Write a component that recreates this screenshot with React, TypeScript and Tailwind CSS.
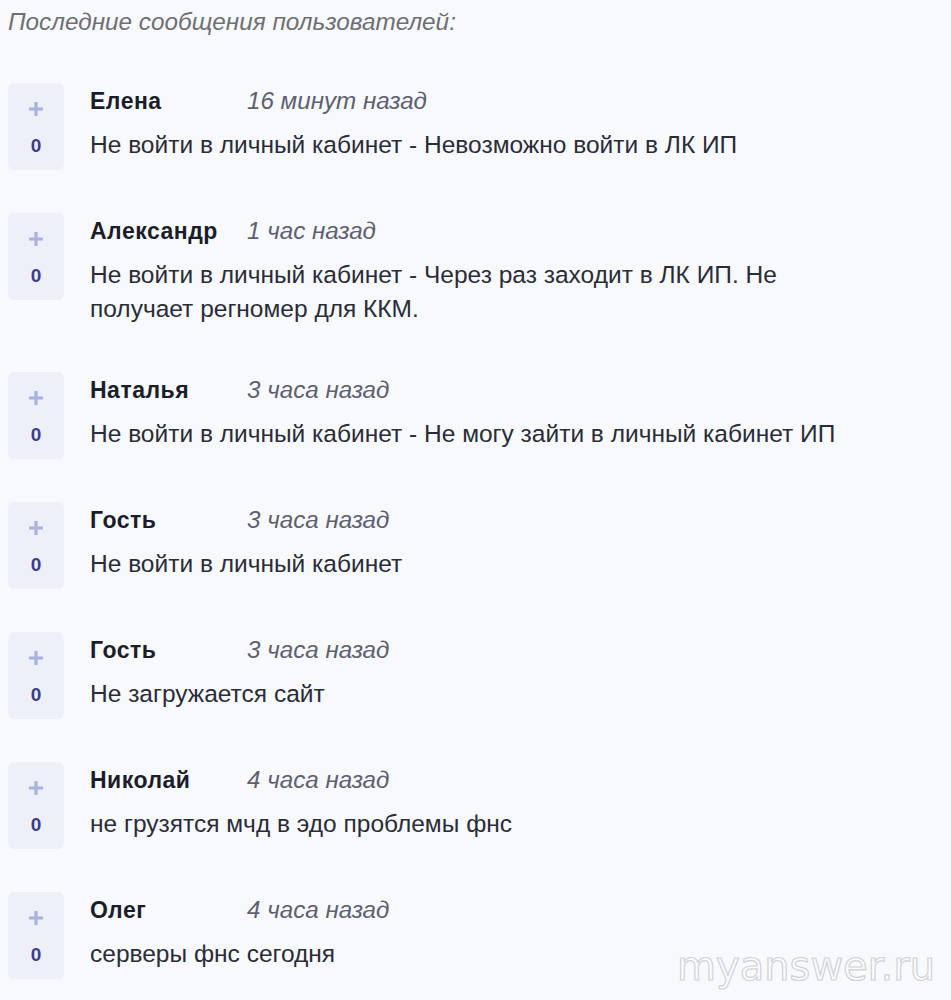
const messages = [
  { name: "Елена", time: "16 минут назад", text: "Не войти в личный кабинет - Невозможно войти в ЛК ИП" },
  {
    name: "Александр",
    time: "1 час назад",
    text: "Не войти в личный кабинет - Через раз заходит в ЛК ИП. Не получает регномер для ККМ.",
  },
  { name: "Наталья", time: "3 часа назад", text: "Не войти в личный кабинет - Не могу зайти в личный кабинет ИП" },
  { name: "Гость", time: "3 часа назад", text: "Не войти в личный кабинет" },
  { name: "Гость", time: "3 часа назад", text: "Не загружается сайт" },
  { name: "Николай", time: "4 часа назад", text: "не грузятся мчд в эдо проблемы фнс" },
  { name: "Олег", time: "4 часа назад", text: "серверы фнс сегодня" },
]

function VoteBox() {
  return (
    <div className="flex h-[87px] w-[56px] shrink-0 flex-col items-center rounded-md bg-[#eef0f9]">
      <svg className="mt-[19px]" width="14" height="14" viewBox="0 0 14 14">
        <path d="M7 0v14M0 7h14" stroke="#a9b1dd" strokeWidth="3.2" />
      </svg>
      <span className="mt-[20px] text-[19px] leading-none font-bold text-[#3c3e8c]">0</span>
    </div>
  )
}

export default function App() {
  return (
    <div className="relative min-h-screen w-full overflow-hidden bg-[#f8f9fc] font-['Liberation_Sans',Arial,sans-serif]">
      <div className="px-2 pt-[4px]">
        <p className="text-[24.3px] leading-[36px] text-[#6e6f76] italic">Последние сообщения пользователей:</p>

        <div className="mt-[43px] flex flex-col gap-[43px]">
          {messages.map((m, i) => (
            <div key={i} className="flex gap-[26px]">
              <VoteBox />
              <div className="min-w-0 flex-1 pb-[3px]">
                <div className="flex h-[36px] items-center leading-[36px]">
                  <span className="w-[157px] shrink-0 text-[23px] tracking-[0.5px] font-bold text-[#1b1d2b]">
                    {m.name}
                  </span>
                  <span className="text-[24.2px] text-[#5d6070] italic">{m.time}</span>
                </div>
                <p className="mt-[9px] max-w-[765px] text-[24.5px] leading-[34px] text-[#2a2c38]">{m.text}</p>
              </div>
            </div>
          ))}
        </div>
      </div>

      <div className="pointer-events-none absolute right-[16px] bottom-[14px] font-['DejaVu_Sans',sans-serif] text-[40px] leading-none text-[#fbfbfd] [-webkit-text-stroke:1.2px_#d2d3d8]">
        myanswer.ru
      </div>
    </div>
  )
}
